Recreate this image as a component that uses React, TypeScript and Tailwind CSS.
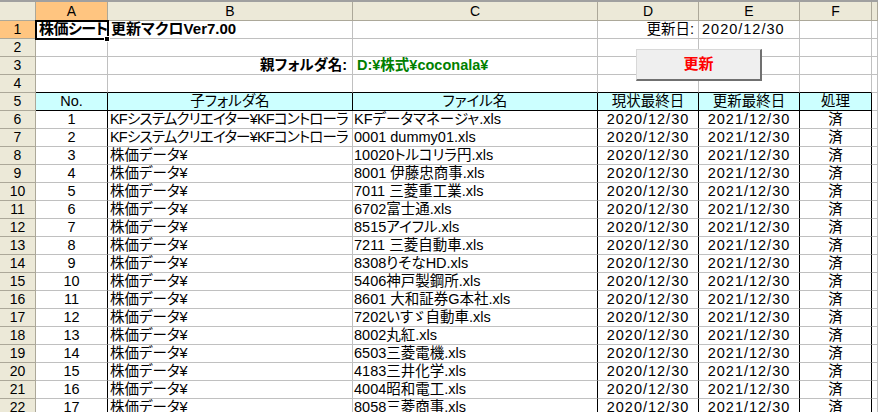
import React from "react";

const GRID =
  "grid grid-cols-[36px_72px_245px_245px_101px_101px_72px_1fr] grid-rows-[19px] auto-rows-[18px]";

const FONT =
  "font-['Liberation_Sans','Noto_Sans_CJK_JP',sans-serif] [font-feature-settings:'palt']";

const KF = "KFシステムクリエイター¥KFコントローラ";
const KABU = "株価データ¥";

const rows: [string, string][] = [
  [KF, "KFデータマネージャ.xls"],
  [KF, "0001 dummy01.xls"],
  [KABU, "10020トルコリラ円.xls"],
  [KABU, "8001 伊藤忠商事.xls"],
  [KABU, "7011 三菱重工業.xls"],
  [KABU, "6702富士通.xls"],
  [KABU, "8515アイフル.xls"],
  [KABU, "7211 三菱自動車.xls"],
  [KABU, "8308りそなHD.xls"],
  [KABU, "5406神戸製鋼所.xls"],
  [KABU, "8601 大和証券G本社.xls"],
  [KABU, "7202いすゞ自動車.xls"],
  [KABU, "8002丸紅.xls"],
  [KABU, "6503三菱電機.xls"],
  [KABU, "4183三井化学.xls"],
  [KABU, "4004昭和電工.xls"],
  [KABU, "8058三菱商事.xls"],
];

function Hd({ children, sel }: { children?: React.ReactNode; sel?: boolean }) {
  return (
    <div
      className={
        "flex items-center justify-center border-r border-b border-[#aca899] text-[14px] text-black " +
        (sel ? "bg-[#ffc580]" : "bg-[#ece9d8]")
      }
    >
      {children}
    </div>
  );
}

function C({
  children,
  className = "",
  green,
}: {
  children?: React.ReactNode;
  className?: string;
  green?: boolean;
}) {
  return (
    <div
      className={
        "flex items-center overflow-hidden whitespace-nowrap border-b border-r border-[#c0c0c0] text-[14.5px] " +
        (green ? "text-[#008000] " : "text-black ") +
        className
      }
    >
      {children}
    </div>
  );
}

export default function App() {
  return (
    <div className={"relative h-[412px] w-[878px] overflow-hidden bg-white " + FONT}>
      <div className="h-[2px] bg-[#a0a0a0]" />
      <div className={GRID}>
        {/* column header row */}
        <Hd />
        <Hd sel>A</Hd>
        <Hd>B</Hd>
        <Hd>C</Hd>
        <Hd>D</Hd>
        <Hd>E</Hd>
        <Hd>F</Hd>
        <Hd />

        {/* row 1 */}
        <Hd sel>1</Hd>
        <C className="pl-[3px] font-bold text-[15px] tracking-[-0.5px]">株価シート</C>
        <C className="pl-[3px] font-bold text-[15px]">更新マクロVer7.00</C>
        <C />
        <C className="justify-end pr-[4px]">更新日:</C>
        <C className="pl-[3px] tracking-[1px]">2020/12/30</C>
        <C />
        <C />

        {/* row 2 */}
        <Hd>2</Hd>
        <C />
        <C />
        <C />
        <C />
        <C />
        <C />
        <C />

        {/* row 3 */}
        <Hd>3</Hd>
        <C />
        <C className="justify-end pr-[5px] font-bold">親フォルダ名:</C>
        <C green className="pl-[4px] font-bold">D:¥株式¥coconala¥</C>
        <C />
        <C />
        <C />
        <C />

        {/* row 4 */}
        <Hd>4</Hd>
        <C className="border-b-black" />
        <C className="border-b-black" />
        <C className="border-b-black" />
        <C className="border-b-black" />
        <C className="border-b-black" />
        <C className="border-b-black" />
        <C />

        {/* row 5 table header */}
        <Hd>5</Hd>
        <C className="justify-center border-r-black border-b-black bg-[#ccffff]">No.</C>
        <C className="justify-center border-r-black border-b-black bg-[#ccffff]">子フォルダ名</C>
        <C className="justify-center border-r-black border-b-black bg-[#ccffff]">ファイル名</C>
        <C className="justify-center border-r-black border-b-black bg-[#ccffff]">現状最終日</C>
        <C className="justify-center border-r-black border-b-black bg-[#ccffff]">更新最終日</C>
        <C className="justify-center border-r-black border-b-black bg-[#ccffff]">処理</C>
        <C />

        {rows.map(([folder, file], i) => (
          <React.Fragment key={i}>
            <Hd>{i + 6}</Hd>
            <C className="justify-center border-r-black">{i + 1}</C>
            <C className={"pl-[2px] " + (i < 2 ? "tracking-[-0.8px]" : "")}>{folder}</C>
            <C className="pl-[1px] border-r-black">{file}</C>
            <C className="justify-center tracking-[1px] border-r-black">2020/12/30</C>
            <C className="justify-center tracking-[1px] border-r-black">2021/12/30</C>
            <C className="justify-center border-r-black">済</C>
            <C />
          </React.Fragment>
        ))}
      </div>

      {/* selection of A1 */}
      <div className="pointer-events-none absolute left-[35px] top-[20px] h-[20px] w-[74px] border-2 border-black" />
      <div className="pointer-events-none absolute left-[104px] top-[36px] h-[6px] w-[6px] border border-white bg-black" />

      {/* 更新 button */}
      <button className="absolute left-[636px] top-[49px] flex h-[32px] w-[126px] items-center justify-center border-t border-l border-[#d8d8d8] border-r-2 border-b-2 border-r-[#707070] border-b-[#707070] bg-[#efefef] text-[15px] font-bold text-[#ff0000]">
        更新
      </button>
    </div>
  );
}
